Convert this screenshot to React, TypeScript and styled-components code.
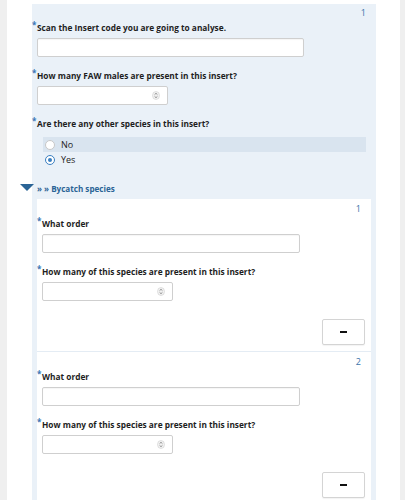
import React from "react";
import styled, { createGlobalStyle } from "styled-components";

const GlobalStyle = createGlobalStyle`
  html, body {
    margin: 0;
    padding: 0;
    background: #efefef;
    font-family: "Open Sans", "Liberation Sans", sans-serif;
  }
`;

const Page = styled.div`
  margin: 0 5px 0 7px;
  height: 500px;
  overflow: hidden;
  background: #ffffff;
  padding: 4px 24px 0 25px;
`;

const Group = styled.div`
  background: #eaf1f8;
  padding: 3px 0 40px 0;
  min-height: 600px;
`;

const Index = styled.div<{ $pad: number }>`
  text-align: right;
  font-size: 9px;
  line-height: 12px;
  color: #3b73a8;
  padding-right: ${(p) => p.$pad}px;
`;

const Label = styled.div<{ $top: number }>`
  margin-top: ${(p) => p.$top}px;
  display: flex;
  align-items: flex-start;
  font-size: 8.3px;
  font-weight: 700;
  line-height: 12px;
  color: #1e1e1e;
`;

const Asterisk = styled.span`
  width: 5px;
  color: #3a76b5;
  font-size: 8px;
  font-weight: 700;
  line-height: 8px;
  margin-top: -1px;
`;

const TextInput = styled.input<{ $w: number }>`
  display: block;
  box-sizing: border-box;
  width: ${(p) => p.$w}px;
  height: 19px;
  margin: 4px 0 0 5px;
  border: 1px solid #cfcfcf;
  border-radius: 2px;
  background: #fff;
  box-shadow: inset 0 1px 1px rgba(0, 0, 0, 0.04);
  outline: none;
  font-family: inherit;
`;

const NumberBox = styled.div`
  box-sizing: border-box;
  width: 131px;
  height: 19px;
  margin: 4px 0 0 5px;
  border: 1px solid #cfcfcf;
  border-radius: 2px;
  background: #fff;
  display: flex;
  align-items: center;
  justify-content: flex-end;
  padding-right: 7px;
`;

const RadioList = styled.div`
  margin: 7px 10px 0 11px;
`;

const RadioRow = styled.div<{ $hover?: boolean }>`
  height: 15px;
  display: flex;
  align-items: center;
  gap: 6px;
  padding-left: 2px;
  background: ${(p) => (p.$hover ? "#d9e4ef" : "transparent")};
  font-size: 9px;
  color: #222;
`;

const RadioDot = styled.span<{ $on?: boolean }>`
  box-sizing: border-box;
  width: 10px;
  height: 10px;
  border-radius: 50%;
  background: #fff;
  border: 1px solid ${(p) => (p.$on ? "#3a7fc1" : "#c8c8c8")};
  display: flex;
  align-items: center;
  justify-content: center;
  &::after {
    content: "";
    width: 4px;
    height: 4px;
    border-radius: 50%;
    background: ${(p) => (p.$on ? "#3a7fc1" : "transparent")};
  }
`;

const SectionHeader = styled.div`
  margin: 15px 0 0 -12px;
  display: flex;
  align-items: center;
  height: 12px;
  gap: 3px;
  font-size: 8.1px;
  font-weight: 700;
  color: #2a6496;
`;

const Panel = styled.div`
  margin: 5px 5px 0 5px;
  background: #fff;
`;

const Item = styled.div`
  padding: 4px 0 6px 0;
  border-bottom: 1px solid #e4ecf4;
`;

const ButtonRow = styled.div`
  display: flex;
  justify-content: flex-end;
  padding-right: 6px;
  margin-top: 18px;
`;

const RemoveButton = styled.button`
  width: 43px;
  height: 26px;
  border: 1px solid #d4d4d4;
  border-radius: 2px;
  background: #fff;
  display: flex;
  align-items: center;
  justify-content: center;
  box-shadow: 0 1px 1px rgba(0, 0, 0, 0.05);
  &::before {
    content: "";
    width: 7px;
    height: 2px;
    background: #111;
  }
`;

const Spinner = () => (
  <svg width="8" height="9" viewBox="0 0 8 9">
    <ellipse cx="4" cy="4.5" rx="3.5" ry="4" fill="#f2f2f2" stroke="#d0d0d0" strokeWidth="0.6" />
    <path d="M2.6 3.6 L4 2.3 L5.4 3.6" fill="none" stroke="#777" strokeWidth="0.8" />
    <path d="M2.6 5.4 L4 6.7 L5.4 5.4" fill="none" stroke="#777" strokeWidth="0.8" />
  </svg>
);

const Triangle = () => (
  <svg width="14" height="8" viewBox="0 0 14 8">
    <path d="M0 0 H14 L7 7 Z" fill="#2a6496" />
  </svg>
);

const FieldLabel = ({ top, children }: { top: number; children: React.ReactNode }) => (
  <Label $top={top}>
    <Asterisk>*</Asterisk>
    <span>{children}</span>
  </Label>
);

const BycatchItem = ({ n }: { n: number }) => (
  <Item>
    <Index $pad={10}>{n}</Index>
    <FieldLabel top={3}>What order</FieldLabel>
    <TextInput $w={258} />
    <FieldLabel top={13}>How many of this species are present in this insert?</FieldLabel>
    <NumberBox>
      <Spinner />
    </NumberBox>
    <ButtonRow>
      <RemoveButton aria-label="remove" />
    </ButtonRow>
  </Item>
);

export default function App() {
  return (
    <>
      <GlobalStyle />
      <Page>
        <Group>
          <Index $pad={10}>1</Index>
          <FieldLabel top={3}>Scan the Insert code you are going to analyse.</FieldLabel>
          <TextInput $w={267} />
          <FieldLabel top={13}>How many FAW males are present in this insert?</FieldLabel>
          <NumberBox>
            <Spinner />
          </NumberBox>
          <FieldLabel top={13}>Are there any other species in this insert?</FieldLabel>
          <RadioList>
            <RadioRow $hover>
              <RadioDot />
              No
            </RadioRow>
            <RadioRow>
              <RadioDot $on />
              Yes
            </RadioRow>
          </RadioList>
          <SectionHeader>
            <Triangle />
            <span>» » Bycatch species</span>
          </SectionHeader>
          <Panel>
            <BycatchItem n={1} />
            <BycatchItem n={2} />
          </Panel>
        </Group>
      </Page>
    </>
  );
}
